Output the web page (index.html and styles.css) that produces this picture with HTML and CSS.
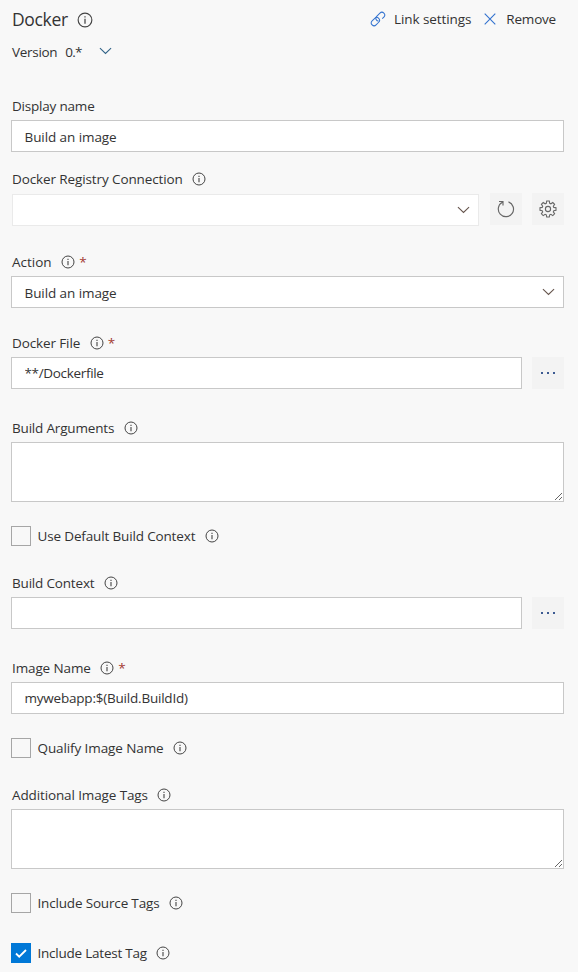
FILE: index.html
```html
<!DOCTYPE html>
<html lang="en">
<head>
<meta charset="utf-8">
<title>Docker</title>
<link rel="stylesheet" href="styles.css">
</head>
<body>
<svg class="defs" width="0" height="0" aria-hidden="true">
  <symbol id="info" viewBox="0 0 14 14"><circle cx="7" cy="7" r="6" fill="none" stroke="currentColor"/><path d="M7 6v4.2M7 3.7v1.2" stroke="currentColor" stroke-width="1.1"/></symbol>
  <symbol id="chevron" viewBox="0 0 14 8"><path d="M1 1l6 5.7L13 1" fill="none" stroke="currentColor" stroke-width="1.2"/></symbol>
</svg>
<main class="task">
  <header class="head">
    <h1 class="title"><span class="t-title">Docker</span><svg class="info big"><use href="#info"/></svg></h1>
    <div class="actions">
      <svg class="link-icon" viewBox="0 0 16 16"><g transform="rotate(-45 8 8)" fill="none" stroke="currentColor"><rect x="-.3" y="5.200" width="9.300" height="5.600" rx="2.800"/><path d="M8.600 5.200h4.900a2.800 2.800 0 0 1 0 5.600h-2.300M8.600 5.200a2.800 2.800 0 0 0-1.700 4.700"/></g></svg>
      <span class="t-link">Link settings</span>
      <svg class="close-icon" viewBox="0 0 12 12"><path d="M.7.7l10.600 10.600M11.300.7L.7 11.300" stroke="currentColor" stroke-width="1.100"/></svg>
      <span class="t-remove">Remove</span>
    </div>
  </header>
  <div class="version"><span class="t-version">Version</span><span class="t-number">0.*</span><svg class="chevron"><use href="#chevron"/></svg></div>

  <div class="label first"><span class="t-display">Display name</span></div>
  <input class="box v-build" value="Build an image">

  <div class="label after-name"><span class="t-registry">Docker Registry Connection</span><svg class="info"><use href="#info"/></svg></div>
  <div class="row">
    <div class="box select faint"><span></span><svg class="chevron"><use href="#chevron"/></svg></div>
    <button class="square"><svg class="refresh" viewBox="0 0 18 18"><path d="M11.500 1.900A7.600 7.600 0 1 1 5.400 2.300M2 1.500h4v4" fill="none" stroke="currentColor" stroke-width="1.150"/></svg></button>
    <button class="square"><svg class="gear" viewBox="0 0 18 18"><path d="M7.700 1h2.600l.4 2.300 1.200.5 1.900-1.300 1.800 1.800-1.300 1.900.5 1.200 2.200.4v2.500l-2.200.4-.5 1.200 1.300 1.900-1.800 1.800-1.900-1.300-1.200.5-.4 2.200H7.700l-.4-2.200-1.200-.5-1.900 1.300-1.800-1.800 1.300-1.900-.5-1.200-2.200-.4V7.800l2.200-.4.5-1.200-1.300-1.900 1.800-1.800 1.900 1.300 1.200-.5z" fill="none" stroke="currentColor" stroke-width="1.100"/><circle cx="9" cy="9" r="2.600" fill="none" stroke="currentColor" stroke-width="1.100"/></svg></button>
  </div>

  <div class="label after-registry"><span class="t-action">Action</span><svg class="info"><use href="#info"/></svg><b class="req">*</b></div>
  <div class="box select"><span class="v-build">Build an image</span><svg class="chevron"><use href="#chevron"/></svg></div>

  <div class="label after-action"><span class="t-file">Docker File</span><svg class="info"><use href="#info"/></svg><b class="req">*</b></div>
  <div class="row"><input class="box v-file" value="**/Dockerfile"><button class="square"><i class="dots"></i></button></div>

  <div class="label after-path"><span class="t-args">Build Arguments</span><svg class="info"><use href="#info"/></svg></div>
  <textarea class="box area"></textarea>

  <div class="check"><span class="tick"></span><span class="t-default">Use Default Build Context</span><svg class="info"><use href="#info"/></svg></div>

  <div class="label after-check"><span class="t-context">Build Context</span><svg class="info"><use href="#info"/></svg></div>
  <div class="row"><input class="box"><button class="square"><i class="dots"></i></button></div>

  <div class="label after-path"><span class="t-image">Image Name</span><svg class="info"><use href="#info"/></svg><b class="req">*</b></div>
  <input class="box v-image" value="mywebapp:$(Build.BuildId)">

  <div class="check"><span class="tick"></span><span class="t-qualify">Qualify Image Name</span><svg class="info"><use href="#info"/></svg></div>

  <div class="label after-check"><span class="t-tags">Additional Image Tags</span><svg class="info"><use href="#info"/></svg></div>
  <textarea class="box area"></textarea>

  <div class="check"><span class="tick"></span><span class="t-source">Include Source Tags</span><svg class="info"><use href="#info"/></svg></div>
  <div class="check last"><span class="tick on"><svg viewBox="0 0 12 9"><path d="M1 4.500l3.200 3.200L11 1" fill="none" stroke="#fff" stroke-width="1.800"/></svg></span><span class="t-latest">Include Latest Tag</span><svg class="info"><use href="#info"/></svg></div>
</main>
</body>
</html>
```
FILE: styles.css
```css
* { box-sizing: border-box; }
body { margin: 0; background: #f8f8f8; color: #333; font: 13.5px/20px "Open Sans", "Noto Sans", sans-serif; }
.defs { display: block; height: 0; }
svg { display: block; flex: none; }
.task { width: 578px; height: 972px; overflow: hidden; padding: 7px 14px 0 11px; }
.head { display: flex; justify-content: space-between; height: 25px; align-items: center; }
.title { display: flex; align-items: center; margin: 0; font-size: 17.5px; line-height: 25px; font-weight: 400; }
.actions { display: flex; align-items: center; height: 24px; margin-bottom: 2px; padding-right: 8px; }
.link-icon { width: 16px; height: 16px; margin-right: 8px; color: #3272cf; }
.close-icon { width: 12px; height: 12px; margin: 0 10px 0 13px; color: #3272cf; }
.version { display: flex; align-items: center; height: 20px; margin-top: 10px; padding-left: 1px; }
.version .t-number { margin: 0 17px 0 8px; }
.version .chevron { margin-bottom: 2px; color: #326488; }
.chevron { width: 13px; height: 8px; color: #67564e; }
span { white-space: nowrap; }
.label { display: flex; align-items: center; height: 20px; margin-bottom: 4px; padding-left: 1px; }
.first { margin-top: 34px; }
.after-name { margin-top: 17px; }
.after-registry { margin-top: 27px; }
.after-action { margin-top: 25px; }
.after-path { margin-top: 29px; }
.after-check { margin-top: 27px; }
.info { width: 14px; height: 14px; margin-left: 9.500px; color: #444; }
.info.big { width: 16px; height: 16px; }
.req { margin-left: 4px; color: #a33a32; font-weight: 400; }
.box { display: block; width: 100%; height: 32px; margin: 0; padding: 1px 13px 0 12.500px; border: 1px solid #c8c8c8; border-radius: 0; background: #fff; color: #333; font: inherit; outline: 0; }
.select { display: flex; align-items: center; justify-content: space-between; padding: 1px 8px 0 12.500px; }
.select .chevron { margin-bottom: 1px; }
.faint { border-color: #eaeaea; margin: 1px 0 -1px 1px; }
.row { display: flex; gap: 10px; height: 32px; }
.row .box { flex: 1; min-width: 0; }
.row .faint { margin-right: 1px; }
.square { width: 32px; height: 32px; flex: none; display: grid; place-items: center; padding: 0; border: 0; background: #f3f3f3; color: #666; }
.refresh, .gear { width: 18px; height: 18px; }
.dots { width: 14px; height: 2px; background: repeating-linear-gradient(90deg, #3d5b92 0 2px, transparent 2px 6px); }
.area { height: 60px; resize: both; }
.check { display: flex; align-items: center; height: 20px; margin-top: 24px; }
.last { margin-top: 30px; }
.tick { width: 20px; height: 20px; margin-right: 6.500px; border: 1px solid #a6a6a6; display: grid; place-items: center; flex: none; }
.tick.on { background: #0078d7; border-color: #0078d7; }
.tick svg { width: 12px; height: 9px; }

/* Per-string tracking */
.t-title { letter-spacing: -.35px; padding-left: 1px; }
.t-link { letter-spacing: -.08px; }
.t-remove { letter-spacing: -.2px; }
.t-version { letter-spacing: -.3px; }
.t-number { letter-spacing: -.8px; }
.t-display { letter-spacing: -.2px; }
.t-registry { letter-spacing: -.11px; }
.t-file { letter-spacing: -.12px; }
.t-args { letter-spacing: -.18px; }
.t-default { letter-spacing: -.15px; }
.t-context { letter-spacing: -.18px; }
.t-image { letter-spacing: -.12px; }
.t-qualify { letter-spacing: -.1px; }
.t-tags { letter-spacing: -.12px; }
.t-source { letter-spacing: -.17px; }
.t-latest { letter-spacing: -.23px; }
.v-build { letter-spacing: -.08px; }
.v-file { letter-spacing: -.33px; padding-bottom: 1px; padding-top: 0; }
.v-image { letter-spacing: -.21px; padding-bottom: 1px; padding-top: 0; }
```
